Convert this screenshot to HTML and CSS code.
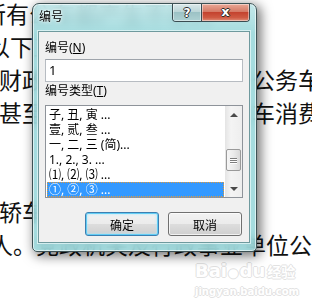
FILE: index.html
```html
<!DOCTYPE html>
<html>
<head>
    <meta charset="utf-8" />
    <title>编号</title>
    <link rel="stylesheet" href="styles.css">
</head>
<body>

    <div id="page">
        <!-- 背景文章 -->
        <div class="article">
            <div class="line l1">所有公车都产生不菲的</div>
            <div class="line l2">以下三个方面的问题</div>
            <div class="line l3">财政资金很大一部分用于公务车辆</div>
            <div class="line l3">甚至有些单位超标准的公车消费现象</div>
            <div class="line"></div>
            <div class="line"></div>
            <div class="line l3">轿车作为公务用车</div>
            <div class="line l8">人。党政机关及行政事业单位公务用车</div>
        </div>

        <div class="watermark">
            <div class="wm-logo">Bai<span class="paw">&#9679;</span>du<span class="wm-cn">经验</span></div>
            <div class="wm-url">jingyan.baidu.com</div>
        </div>

        <!-- 编号对话框 -->
        <div id="dlgNumber" class="dialog">
            <div class="titlebar">
                <span class="title">编号</span>
                <div class="capbtns">
                    <span class="capbtn help">?</span>
                    <span class="capbtn close">x</span>
                </div>
            </div>
            <div class="client">
                <div class="label">编号(<u>N</u>)</div>
                <div class="textbox">1</div>
                <div class="label label-type">编号类型(<u>T</u>)</div>
                <div class="listbox">
                    <ul class="items">
                        <li>子, 丑, 寅 ...</li>
                        <li>壹, 贰, 叁 ...</li>
                        <li>一, 二, 三 (简)...</li>
                        <li>1., 2., 3. ...</li>
                        <li>⑴, ⑵, ⑶ ...</li>
                        <li class="selected">①, ②, ③ ...</li>
                    </ul>
                    <div class="vscroll">
                        <div class="arrow up"></div>
                        <div class="track">
                            <div class="thumb"><i></i><i></i><i></i></div>
                        </div>
                        <div class="arrow down"></div>
                    </div>
                </div>
                <div class="buttons">
                    <button class="btn default">确定</button>
                    <button class="btn">取消</button>
                </div>
            </div>
        </div>
    </div>

</body>
</html>
```

FILE: styles.css
```css
body {
    margin: 0;
    background: #fff;
    font-family: "Noto Sans", "Noto Sans CJK SC", sans-serif;
}

#page {
    position: relative;
    width: 312px;
    height: 305px;
    overflow: hidden;
}

.article {
    margin-top: -3px;
    font-family: "Noto Sans CJK SC", sans-serif;
    font-size: 23px;
    color: #111;
}
.line {
    height: 33px;
    line-height: 33px;
    white-space: nowrap;
    overflow: hidden;
}
.l1 { text-indent: -17px; }
.l2 { text-indent: -13px; }
.l3 { text-indent: -1px; }
.l8 { text-indent: -10px; }

.watermark {
    position: absolute;
    left: 195px;
    top: 260px;
    color: #fff;
    font-family: "DejaVu Sans", sans-serif;
    font-weight: bold;
    text-shadow: 1px 0 #e2e2e2, -1px 0 #e2e2e2, 0 1px #e2e2e2, 0 -1px #e2e2e2;
}
.wm-logo { font-size: 18px; line-height: 22px; }
.paw { font-size: 12px; margin: 0 1px; }
.wm-cn { font-family: "Noto Sans CJK SC", sans-serif; font-size: 14px; margin-left: 2px; }
.wm-url { font-size: 10px; line-height: 12px; margin-top: 2px; }

/* 对话框外框 */
.dialog {
    position: absolute;
    left: 32px;
    top: 3px;
    width: 225px;
    height: 249px;
    box-sizing: border-box;
    display: flex;
    flex-direction: column;
    padding: 0 6px 8px 5px;
    border: 1px solid #3d5255;
    border-radius: 7px 7px 5px 5px;
    background: linear-gradient(to bottom, rgba(255,255,255,.35), rgba(255,255,255,0) 30px), rgba(150, 214, 218, .86);
    backdrop-filter: blur(4px);
    box-shadow: inset 0 0 0 1px rgba(255,255,255,.6), 3px 3px 12px 1px rgba(0,0,0,.55);
}

.titlebar {
    height: 27px;
    display: flex;
    justify-content: space-between;
    align-items: flex-start;
}
.title {
    font-family: "Noto Sans CJK SC", sans-serif;
    font-size: 12px;
    line-height: 16px;
    margin: 4px 0 0 1px;
    color: #000;
    text-shadow: 0 0 4px #fff, 0 0 2px #fff;
}

.capbtns {
    display: flex;
    height: 17px;
    border: 1px solid #3a4c51;
    border-top: 0;
    border-radius: 0 0 4px 4px;
    overflow: hidden;
}
.capbtn {
    display: flex;
    justify-content: center;
    align-items: center;
    font-family: "DejaVu Sans", sans-serif;
    font-weight: bold;
    color: #fff;
    text-shadow: 1px 0 #2b2b2b, -1px 0 #2b2b2b, 0 1px #2b2b2b, 0 -1px #2b2b2b;
    box-shadow: inset 0 0 0 1px rgba(255,255,255,.45);
}
.help {
    width: 28px;
    font-size: 12px;
    border-right: 1px solid #3a4c51;
    background: linear-gradient(#dbe9ea, #bcd6d8 45%, #9cc2c5 50%, #aed1d3);
}
.close {
    width: 47px;
    font-size: 13px;
    line-height: 13px;
    padding-bottom: 2px;
    box-sizing: border-box;
    background: linear-gradient(#eaa896, #d57a66 45%, #c4432f 50%, #cf5a43 80%, #e0907a);
}

/* 客户区 */
.client {
    flex: 1;
    background: #f0f0f0;
    border: 1px solid #6f9a9e;
    box-shadow: 0 0 0 1px rgba(235,250,250,.7);
    padding: 8px 6px 0 6px;
    font-family: "Noto Sans", "Noto Sans CJK SC", sans-serif;
    font-size: 12px;
    color: #000;
}

.label {
    line-height: 16px;
}
.label-type {
    margin-top: 1px;
}

.textbox {
    margin-top: 3px;
    height: 23px;
    box-sizing: border-box;
    border: 1px solid #b7bcc2;
    border-top-color: #9ea4ab;
    background: #fff;
    padding-left: 3px;
    line-height: 21px;
    font-size: 13px;
}

.listbox {
    margin-top: 6px;
    height: 93px;
    box-sizing: border-box;
    border: 1px solid #8e939a;
    background: #fff;
    display: flex;
}
.items {
    flex: 1;
    list-style: none;
    margin: 0;
    padding: 1px 0 0;
}
.items li {
    height: 15px;
    line-height: 15px;
    margin: 0 1px;
    padding-left: 2px;
    white-space: nowrap;
}
.items li.selected {
    background: #3399ff;
    color: #fff;
    outline: 1px dotted #e09a3c;
    outline-offset: -1px;
}

.vscroll {
    width: 17px;
    display: flex;
    flex-direction: column;
    background: linear-gradient(to right, #e4e4e4, #f4f4f4 35%, #eeeeee);
}
.arrow {
    height: 17px;
    display: flex;
    justify-content: center;
    align-items: center;
}
.arrow::before {
    content: "";
    width: 0;
    height: 0;
    border-left: 4px solid transparent;
    border-right: 4px solid transparent;
}
.up::before { border-bottom: 4px solid #4a4a4a; }
.down::before { border-top: 4px solid #4a4a4a; }
.track {
    flex: 1;
}
.thumb {
    margin: 26px 1px 0 1px;
    height: 22px;
    box-sizing: border-box;
    border: 1px solid #9a9a9a;
    border-radius: 2px;
    background: linear-gradient(to right, #f6f6f6, #ebebeb 50%, #d9d9d9);
    display: flex;
    flex-direction: column;
    justify-content: center;
    align-items: center;
    gap: 1px;
}
.thumb i {
    width: 7px;
    height: 1px;
    background: #7d7d7d;
    box-shadow: 0 1px #fff;
}

.buttons {
    margin-top: 14px;
    margin-right: 1px;
    display: flex;
    justify-content: flex-end;
    gap: 9px;
}
.btn {
    width: 74px;
    height: 24px;
    padding: 0;
    border: 1px solid #707070;
    border-radius: 3px;
    background: linear-gradient(#f2f2f2, #ebebeb 50%, #dddddd 50%, #cfcfcf);
    box-shadow: inset 0 0 0 1px rgba(255,255,255,.7);
    font-family: "Noto Sans CJK SC", sans-serif;
    font-size: 12px;
    color: #000;
}
.btn.default {
    border-color: #3c7fb1;
    box-shadow: inset 0 0 0 1px #62cdf5, inset 0 0 3px 1px #aee6fa;
}
```
